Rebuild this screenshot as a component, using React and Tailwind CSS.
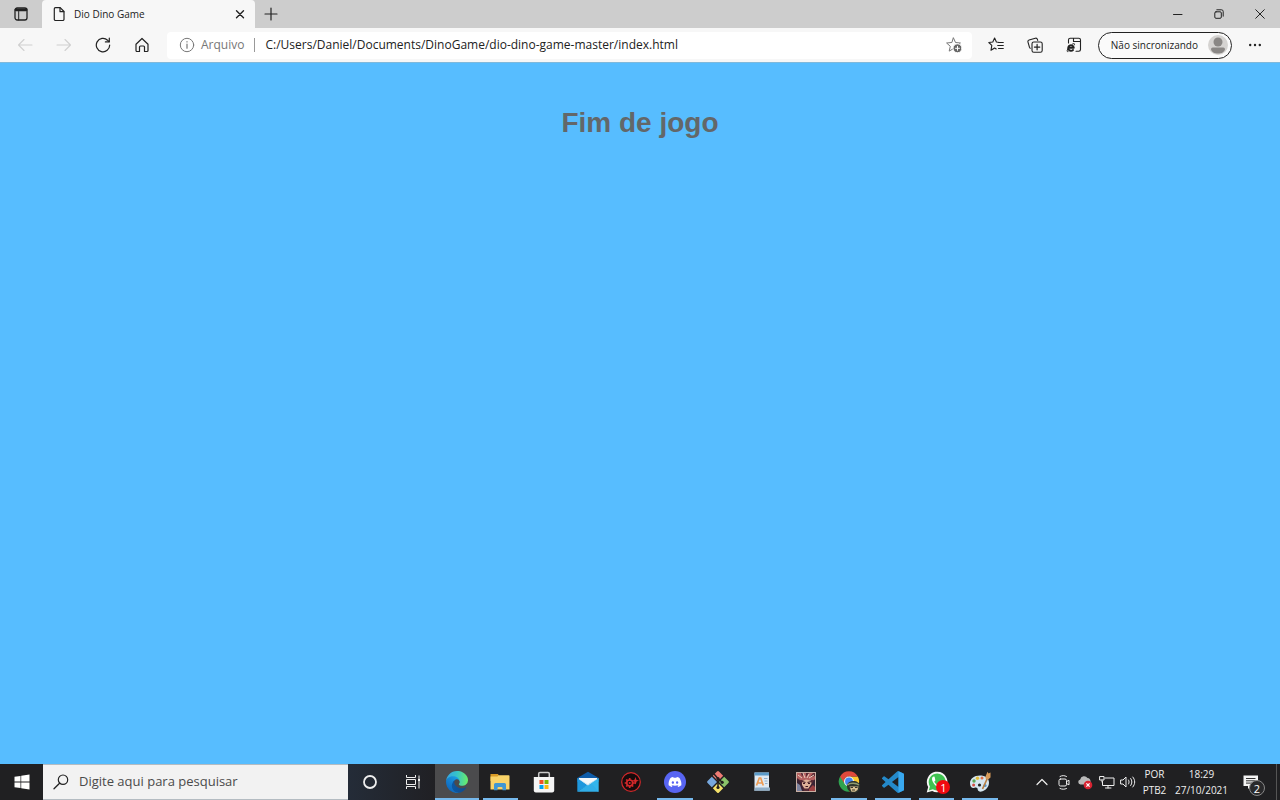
import React from "react";
import { FaDiscord } from "react-icons/fa";

function Icon({ size = 16, className = "", children }) {
  return (
    <svg
      width={size}
      height={size}
      viewBox={`0 0 ${size} ${size}`}
      fill="none"
      stroke="currentColor"
      strokeLinecap="round"
      strokeLinejoin="round"
      className={`shrink-0 ${className}`}
      aria-hidden="true"
    >
      {children}
    </svg>
  );
}

function IconButton({ label, className = "", children }) {
  return (
    <button type="button" aria-label={label} className={`flex items-center justify-center shrink-0 ${className}`}>
      {children}
    </button>
  );
}

const STAR = "M7.500 1l2 4.500 4.900.500-3.700 3.300 1.100 4.800L7.500 11.600l-4.300 2.500 1.100-4.800L.6 6l4.900-.5z";

function TabStrip() {
  return (
    <header className="flex h-7 bg-[#cdcdcd] text-[#222]">
      <IconButton label="Menu de ações da guia" className="w-[42px]">
        <Icon size={14}>
          <rect x="1" y="1" width="12" height="12" rx="2.200" strokeWidth="1.300" />
          <path d="M2 2.800h10" strokeWidth="2.800" />
          <path d="M4.700 4.500v8.500" />
        </Icon>
      </IconButton>
      <div className="flex w-[213px] items-center rounded-t bg-[#f7f7f7] pl-2.5">
        <Icon size={14}>
          <path d="M3.500.6h4.700L12 4.500V12.300a1.200 1.200 0 0 1-1.200 1.200H3.500A1.200 1.200 0 0 1 2.300 12.300V1.800A1.200 1.200 0 0 1 3.500.6z" strokeWidth="1.200" />
          <path d="M8 .8v3.900h3.800" strokeWidth="1.200" />
        </Icon>
        <span className="ml-2 flex-1 text-[10px]">Dio Dino Game</span>
        <IconButton label="Fechar guia" className="h-7 w-[30px]">
          <Icon size={10}>
            <path d="M1.500 1.800l7 7M8.500 1.800l-7 7" strokeWidth="1.400" />
          </Icon>
        </IconButton>
      </div>
      <IconButton label="Nova guia" className="w-8">
        <Icon size={14}>
          <path d="M7 1v12M1 7h12" strokeWidth="1.200" />
        </Icon>
      </IconButton>
      <div className="flex-1" />
      <IconButton label="Minimizar" className="w-[41px]">
        <Icon size={10}>
          <path d="M.5 5.500h8.500" />
        </Icon>
      </IconButton>
      <IconButton label="Restaurar" className="w-[41px]">
        <Icon size={10}>
          <rect x=".8" y="2.800" width="6.500" height="6.500" rx="1.200" />
          <path d="M2.800.8h4.700a1.700 1.700 0 0 1 1.700 1.700v4.700" />
        </Icon>
      </IconButton>
      <IconButton label="Fechar" className="w-[41px]">
        <Icon size={10}>
          <path d="M.7.7l8.600 8.600M9.300.7L.7 9.300" />
        </Icon>
      </IconButton>
    </header>
  );
}

function Toolbar() {
  return (
    <nav className="flex h-[35px] items-center border-b border-[#7fb9dc] bg-[#f7f7f7] pl-[5px] pr-1.5 text-[#222]">
      <IconButton label="Voltar" className="w-[39px] text-[#d0d0d0]">
        <Icon size={16}>
          <path d="M15 8H1.500M7 2.500L1.500 8l5.500 5.500" strokeWidth="1.100" />
        </Icon>
      </IconButton>
      <IconButton label="Avançar" className="w-[39px] text-[#d0d0d0]">
        <Icon size={16}>
          <path d="M1 8h13.500M9 2.500l5.500 5.500-5.500 5.500" strokeWidth="1.100" />
        </Icon>
      </IconButton>
      <IconButton label="Atualizar" className="w-[39px]">
        <Icon size={16}>
          <path d="M14.700 8A6.700 6.700 0 1 1 12.600 3.200L14 4.600" strokeWidth="1.200" />
          <path d="M14.300 1v3.900h-3.900" strokeWidth="1.200" />
        </Icon>
      </IconButton>
      <IconButton label="Página inicial" className="w-[39px]">
        <Icon size={16}>
          <path d="M2 7.200L8 1.500l6 5.700v6.300a1 1 0 0 1-1 1h-2.500V10a1 1 0 0 0-1-1h-3a1 1 0 0 0-1 1v4.500H3a1 1 0 0 1-1-1z" strokeWidth="1.200" />
        </Icon>
      </IconButton>
      <div className="ml-1.5 flex h-[27px] flex-1 items-center rounded bg-white pl-3 pr-1.5">
        <Icon size={16} className="text-[#777]">
          <circle cx="8" cy="8" r="6.700" />
          <path d="M8 7.200v4M8 4.700v.2" strokeWidth="1.200" />
        </Icon>
        <span className="ml-1.5 text-xs text-[#777]">Arquivo</span>
        <span className="ml-2.5 h-3.5 w-px bg-[#999]" />
        <input
          aria-label="Endereço"
          defaultValue="C:/Users/Daniel/Documents/DinoGame/dio-dino-game-master/index.html"
          className="ml-2.5 min-w-0 flex-1 bg-transparent text-xs text-[#222] outline-none"
        />
        <IconButton label="Adicionar aos favoritos" className="w-6 text-[#777]">
          <Icon size={16}>
            <path d={STAR} />
            <circle cx="11.500" cy="11.300" r="4.500" fill="#666" stroke="#fff" />
            <path d="M11.500 9.300v4M9.500 11.300h4" stroke="#fff" />
          </Icon>
        </IconButton>
      </div>
      <IconButton label="Favoritos" className="ml-[5px] w-[39px]">
        <Icon size={16}>
          <path d="M10.300 5.200l-1.900-.2L6.600 1 4.800 5 .8 5.500 3.800 8.300 3 13.300l3.600-2.300 1.600 1" strokeWidth="1.100" />
          <path d="M10.500 5.500h4.800M9.700 8.500h5.600M10.500 11.500h4.800" strokeWidth="1.100" />
        </Icon>
      </IconButton>
      <IconButton label="Coleções" className="w-[39px]">
        <Icon size={16}>
          <path d="M3.300 11.300a1.500 1.500 0 0 1-.8-.9L1 5.200a1.700 1.700 0 0 1 1.100-2.100l6.200-1.900a1.700 1.700 0 0 1 2.100 1.100l.3 1.100" strokeWidth="1.100" />
          <rect x="5" y="5" width="10.200" height="10.200" rx="1.800" strokeWidth="1.100" />
          <path d="M10.100 7.400v5.400M7.400 10.100h5.400" strokeWidth="1.200" />
        </Icon>
      </IconButton>
      <IconButton label="Modo Internet Explorer" className="w-[39px]">
        <Icon size={16}>
          <path d="M2.500 6V3a1.700 1.700 0 0 1 1.700-1.700h8.600A1.700 1.700 0 0 1 14.500 3v9.500a1.700 1.700 0 0 1-1.700 1.700H10M7.500 4.500h7M7.500 4.500V1.500" strokeWidth="1.100" />
          <path d="M2.200 10.800h5.600a2.800 2.800 0 1 0-.8 2.200" strokeWidth="1.900" />
          <path d="M2.500 11C.6 13.600.7 15 2 14.700M6.500 7C8.200 6 9 6.500 8.300 8" strokeWidth="1" />
        </Icon>
      </IconButton>
      <button type="button" className="ml-1 flex h-[27px] shrink-0 items-center gap-2.5 rounded-full border border-[#222] bg-[#fafafa] pl-3 pr-[3px] text-[10px]">
        Não sincronizando
        <svg width="20" height="20" viewBox="0 0 20 20" aria-hidden="true">
          <circle cx="10" cy="10" r="10" fill="#d5d3d1" />
          <circle cx="10" cy="7" r="4.500" fill="#8a8785" />
          <path d="M3 14.200a1.700 1.700 0 0 1 1.700-1.700h10.600a1.700 1.700 0 0 1 1.700 1.700C16.500 17 13.600 18.500 10 18.500S3.500 17 3 14.200z" fill="#8a8785" />
        </svg>
      </button>
      <IconButton label="Configurações e mais" className="ml-1 w-[38px]">
        <svg width="14" height="14" viewBox="0 0 14 14" fill="#222" aria-hidden="true">
          <circle cx="2.200" cy="7" r="1.200" />
          <circle cx="7" cy="7" r="1.200" />
          <circle cx="11.800" cy="7" r="1.200" />
        </svg>
      </IconButton>
    </nav>
  );
}

function AppSvg({ box = 22, size = 22, children }) {
  return (
    <svg width={size} height={size} viewBox={`0 0 ${box} ${box}`} aria-hidden="true">
      {children}
    </svg>
  );
}

const apps = [
  {
    name: "Microsoft Edge",
    open: true,
    active: true,
    icon: (
      <AppSvg box={256}>
        <defs>
          <linearGradient id="edgeBase" x1="60" y1="177" x2="241" y2="177" gradientUnits="userSpaceOnUse">
            <stop stopColor="#0c59a4" />
            <stop offset="1" stopColor="#114a8b" />
          </linearGradient>
          <linearGradient id="edgeLeft" x1="150" y1="95" x2="45" y2="225" gradientUnits="userSpaceOnUse">
            <stop stopColor="#1b9de2" />
            <stop offset=".5" stopColor="#1480d0" />
            <stop offset="1" stopColor="#0f68bd" />
          </linearGradient>
          <linearGradient id="edgeTop" x1="20" y1="80" x2="245" y2="100" gradientUnits="userSpaceOnUse">
            <stop stopColor="#35a9e0" />
            <stop offset=".45" stopColor="#36c3c9" />
            <stop offset="1" stopColor="#66eb6e" />
          </linearGradient>
        </defs>
        <path fill="url(#edgeBase)" d="M231 190.500a92.800 92.800 0 0 1-10.500 4.700 101.800 101.800 0 0 1-35.900 6.500c-47.300 0-88.500-32.600-88.500-74.300A31.500 31.500 0 0 1 112.500 100c-42.800 1.800-53.800 46.400-53.800 72.500 0 73.900 68.100 81.400 82.800 81.400 7.900 0 19.800-2.300 27-4.600l1.300-.4a128.300 128.300 0 0 0 66.600-52.800 4 4 0 0 0-5.300-5.700z" />
        <path fill="url(#edgeLeft)" d="M105.700 241.400A79.200 79.200 0 0 1 83 220.100a80.700 80.700 0 0 1 29.500-120c3.100-1.500 8.500-4.100 15.500-4a32.400 32.400 0 0 1 25.700 13 31.900 31.900 0 0 1 6.400 18.700c0-.2 24.500-79.600-80-79.600-43.900 0-80 41.700-80 78.200a130.200 130.200 0 0 0 12.100 56 128 128 0 0 0 156.400 67.100 75.600 75.600 0 0 1-62.800-8z" />
        <path fill="url(#edgeTop)" d="M152.300 148.900c-.8 1-3.300 2.500-3.300 5.600 0 2.600 1.700 5.100 4.700 7.200 14.400 10 41.500 8.700 41.600 8.700a59.600 59.600 0 0 0 30.300-8.300 61.400 61.400 0 0 0 30.400-52.900c.3-22.400-8-37.300-11.300-43.900C223.500 23.800 177.700 0 128 0A128 128 0 0 0 0 126.200c.5-36.500 36.800-66 80-66 3.500 0 23.500.3 42 10 16.300 8.600 24.900 19 30.900 29.200 6.200 10.700 7.300 24.200 7.300 29.500s-2.700 13.400-7.900 20z" />
      </AppSvg>
    ),
  },
  {
    name: "Explorador de Arquivos",
    open: true,
    icon: (
      <AppSvg>
        <path d="M1.500 3h7.500l1 2h10V10H1.500z" fill="#d99b26" />
        <path d="M1.500 5.500H8.500l1-1.300H19.700a.8.8 0 0 1 .8.800v13.500h-19z" fill="#f9d368" />
        <path d="M5 19.300v-5.800a1.500 1.500 0 0 1 1.500-1.500h9a1.500 1.500 0 0 1 1.500 1.500v5.800h-3.500V17a1 1 0 0 0-1-1h-3a1 1 0 0 0-1 1v2.300z" fill="#3f97d3" />
      </AppSvg>
    ),
  },
  {
    name: "Microsoft Store",
    icon: (
      <AppSvg>
        <path d="M5.700 7V2.800a1.300 1.300 0 0 1 1.300-1.300h8a1.300 1.300 0 0 1 1.300 1.300V7" fill="none" stroke="#c9c9c9" strokeWidth="1.500" />
        <path d="M.8 6h20.400v13.500a2 2 0 0 1-2 2H2.800a2 2 0 0 1-2-2z" fill="#f5f5f5" />
        <path d="M6.500 9h4v4h-4z" fill="#f05125" />
        <path d="M11.500 9h4v4h-4z" fill="#7eb900" />
        <path d="M6.500 14h4v4h-4z" fill="#00a3ee" />
        <path d="M11.500 14h4v4h-4z" fill="#fdb813" />
      </AppSvg>
    ),
  },
  {
    name: "Email",
    icon: (
      <AppSvg>
        <path d="M.3 7L11 .8 21.700 7v4H.3z" fill="#0f5ca8" />
        <path d="M2 7h18v8H2z" fill="#f5f8fa" />
        <path d="M.3 7L11 14.500.3 20.800z" fill="#1e97dd" />
        <path d="M21.700 7L8 15.500l13.700 5.300z" fill="#33b5ec" />
        <path d="M.3 20.800L14 11.800l7.700 9z" fill="#31aee8" />
        <path d="M.3 7L11 13.200 21.700 7 11 14.500z" fill="#d3e3ee" />
      </AppSvg>
    ),
  },
  {
    name: "Gears",
    icon: (
      <AppSvg>
        <circle cx="11" cy="11" r="9.300" fill="#160b0c" stroke="#d3282a" strokeWidth="1.200" />
        <circle cx="9.700" cy="12" r="3" fill="none" stroke="#d3282a" strokeWidth="1.700" />
        <path d="M9.700 7v2M9.700 15v2M4.700 12h2M13 12h3M6.200 8.500L7.500 9.700M6.200 15.500l1.300-1.200M13.200 15.500L12 14.300" stroke="#d3282a" strokeWidth="1.700" />
        <path d="M11.500 9.700l2.800-.6L15.600 6l.9 2.900 2.500.6-2.400.9-.9 3.200-1.200-2.800z" fill="#d3282a" />
        <circle cx="9.700" cy="12" r="1" fill="#d3282a" />
      </AppSvg>
    ),
  },
  {
    name: "Discord",
    open: true,
    icon: (
      <span className="flex h-[22px] w-[22px] items-center justify-center rounded-full bg-[#5865f2] text-white">
        <FaDiscord size={14} />
      </span>
    ),
  },
  {
    name: "Git Bash",
    icon: (
      <AppSvg>
        <path d="M10 .6a1.400 1.400 0 0 1 2 0l4.200 4.200L11 10 5.800 4.800z" fill="#ee7b75" />
        <path d="M17.200 5.800l4.200 4.200a1.400 1.400 0 0 1 0 2l-4.200 4.200L12 11z" fill="#8bc46a" />
        <path d="M4.800 5.800L10 11l-5.200 5.200L.6 12a1.400 1.400 0 0 1 0-2z" fill="#77a8de" />
        <path d="M11 12l5.200 5.200-4.200 4.200a1.400 1.400 0 0 1-2 0l-4.200-4.200z" fill="#f3e06a" />
        <path d="M7 3l4 4.500v9M11 7.500l4.200 3.800" fill="none" stroke="#211d1e" strokeWidth="1.500" />
        <circle cx="11" cy="7.500" r="1.600" fill="#211d1e" />
        <circle cx="11" cy="16.500" r="1.600" fill="#211d1e" />
        <circle cx="15.200" cy="11.300" r="1.600" fill="#211d1e" />
      </AppSvg>
    ),
  },
  {
    name: "WordPad",
    icon: (
      <AppSvg>
        <path d="M3.500 1.500h14.500v18H3.500z" fill="#dfeaf4" />
        <path d="M3.500 1.500h14.500v3H3.500z" fill="#5b9bc9" />
        <path d="M4.500 16.500h14.500v3.300H3z" fill="#8facc3" />
        <path d="M5.500 14.500L8.300 7h1.400l2.600 7.500M6.500 12h5" fill="none" stroke="#ec9c55" strokeWidth="1.700" />
        <path d="M13 7.500h3.500M13.500 10h3M14 12.500h2.500M6 18h9" stroke="#8fb0cc" />
      </AppSvg>
    ),
  },
  {
    name: "Jogo",
    icon: (
      <AppSvg>
        <path d="M1 1h20v20H1z" fill="#c9aea2" />
        <path d="M2 2h18v18H2z" fill="#5a2b35" />
        <path d="M2 2h4l1 4 2-4h2v4l3-4h4l-3 4 5-1v4H5L2 7z" fill="#b3605f" />
        <path d="M3 4l4 3M8 2l2 5M14 3l-2 4M19 4l-5 3" stroke="#eccfbe" />
        <path d="M7 10l4-1.500 5 1 .5 3.500-3 4.500H9.500L7 14z" fill="#ddb198" />
        <path d="M7 10.500l3.500 1M12.500 11.500l4-1M8 12.500h2M13 12.500h2M10.500 15.500h2.500" stroke="#3d1822" strokeWidth="1.200" />
        <path d="M2 8l4 3 1 3 2 6H2zM20 8l-3.500 5-3 5v2H20z" fill="#3a2434" />
        <path d="M2 12l3 2 2 6H2z" fill="#7d839f" />
        <path d="M14 18l4-4 2 2v4h-6z" fill="#9d4142" />
      </AppSvg>
    ),
  },
  {
    name: "Google Chrome",
    open: true,
    icon: (
      <AppSvg>
        <path d="M11 10.500L2.100 5.400A10.200 10.200 0 0 0 11 20.700l4.400-7.700z" fill="#2fa350" />
        <path d="M11 5.400h8.800A10.200 10.200 0 0 1 11 20.700l4.400-7.700z" fill="#fbc92f" />
        <path d="M2.100 5.400A10.200 10.200 0 0 1 19.800 5.400H11a5.100 5.100 0 0 0-4.400 7.700z" fill="#e0493c" />
        <circle cx="11" cy="10.500" r="5" fill="#f1f1f1" />
        <circle cx="11" cy="10.500" r="3.900" fill="#4285f4" />
        <path d="M9 15.500c0-4 3-5.500 6.500-5.500s6.300 2 6.300 5v3l-3 3.500h-6.500L9.500 18z" fill="#2d352c" />
        <path d="M11.500 15.500h9l-1 3.500-2.500 1.700h-3.500z" fill="#d8c193" />
        <path d="M9.500 14c2-2.300 9-2.300 11.500 0" fill="none" stroke="#8e9b70" strokeWidth="1.500" />
        <path d="M12.500 16.500h2.500M17 16.500h2.500M14 19h3" stroke="#3b3628" />
      </AppSvg>
    ),
  },
  {
    name: "Visual Studio Code",
    open: true,
    icon: (
      <AppSvg box={24}>
        <path fill="#2489ca" d="M23.150 2.587L18.210.21a1.494 1.494 0 0 0-1.705.29l-9.460 8.630-4.120-3.128a.999.999 0 0 0-1.276.057L.327 7.261A1 1 0 0 0 .326 8.740L3.899 12 .326 15.260a1 1 0 0 0 .001 1.479L1.650 17.940a.999.999 0 0 0 1.276.057l4.120-3.128 9.460 8.630a1.492 1.492 0 0 0 1.704.29l4.942-2.377A1.500 1.500 0 0 0 24 20.060V3.939a1.500 1.500 0 0 0-.85-1.352zm-5.146 14.861L10.826 12l7.178-5.448v10.896z" />
        <path fill="#39a9f0" d="M18 .2l5.200 2.400A1.500 1.500 0 0 1 24 3.900v16.200a1.500 1.500 0 0 1-.8 1.300L18 23.800z" />
      </AppSvg>
    ),
  },
  {
    name: "WhatsApp",
    open: true,
    badge: "1",
    icon: (
      <AppSvg>
        <path d="M.7 21.500l1.500-5.400A10.300 10.300 0 1 1 6.200 20z" fill="#f7f7f7" />
        <path d="M2.800 19.400l1.100-4A8.500 8.500 0 1 1 6.800 18.300z" fill="#3fc351" />
        <path d="M8.700 6.200c-.3-.6-.5-.6-1-.6-.4 0-1.700.7-1.700 2.500s1.300 3.500 1.500 3.800c.2.200 2.500 4 6.300 5.100 1.800.4 3-.7 3.200-1.500.2-.7.2-1.300 0-1.400l-2.400-1.200c-.3-.1-.5-.1-.7.2l-1 1.200c-.2.300-.4.300-.7.100-1.700-.8-2.900-1.900-3.800-3.500-.2-.3 0-.4.200-.6.700-.8.900-1 .7-1.400z" fill="#fff" />
      </AppSvg>
    ),
  },
  {
    name: "Paint",
    open: true,
    icon: (
      <AppSvg>
        <path d="M11 4.500c-6 0-10 3.500-10 7.500s2 5.500 4.500 4.800c2.300-.6 3 .2 3.200 1.700.3 1.700 2 2.500 4 2 4-1 7.300-4.500 7.300-9s-4-7-9-7z" fill="#d6e6ef" />
        <circle cx="5" cy="10" r="1.700" fill="#5ba957" />
        <circle cx="8.500" cy="7.200" r="1.700" fill="#e3bd3b" />
        <circle cx="13" cy="7" r="1.500" fill="#de6d46" />
        <circle cx="4.600" cy="14" r="1.500" fill="#d34d44" />
        <circle cx="10.500" cy="14" r="1.600" fill="#252525" />
        <circle cx="16" cy="14.500" r="1.600" fill="#4f94d0" />
        <path d="M19 6l-5.500 12" stroke="#b87f43" strokeWidth="1.700" />
        <path d="M16.500 5.500L18.500.8l1 1.800L21.500 1.500v5l-2.500 2-2.500-1z" fill="#d79a59" />
      </AppSvg>
    ),
  },
];

function TaskbarApp({ app }) {
  return (
    <button
      type="button"
      aria-label={app.name}
      className={`relative flex h-full flex-1 items-center justify-center ${app.active ? "bg-[#4b4b4d]" : ""}`}
    >
      {app.icon}
      {app.badge && (
        <span className="absolute right-2 top-4 flex h-3.5 w-3.5 items-center justify-center rounded-full bg-[#f00910] text-[11px] leading-none text-white">
          {app.badge}
        </span>
      )}
      {app.open && (
        <span className={`absolute bottom-0 h-0.5 bg-[#76b9ed] ${app.active ? "inset-x-0" : "inset-x-1"}`} />
      )}
    </button>
  );
}

function Taskbar() {
  return (
    <footer className="flex h-9 items-center bg-[#202022] text-[#eee]">
      <IconButton label="Iniciar" className="h-full w-[43px]">
        <svg width="16" height="16" viewBox="0 0 16 16" fill="#fff" aria-hidden="true">
          <path d="M.5 2.700L6.500 1.900v5.700h-6zM7.200 1.800L15.500.6v7h-8.300zM.5 8.400h6v5.700l-6-.8zM7.200 8.400h8.300v7l-8.300-1.200z" />
        </svg>
      </IconButton>
      <label className="flex h-full w-[305px] items-center border-y border-[#b4bcc2] bg-[#f2f2f2] pl-2.5 text-[#222]">
        <Icon size={16}>
          <circle cx="10" cy="5.700" r="4.700" strokeWidth="1.200" />
          <path d="M6.600 9.200L1 14.800" strokeWidth="1.300" />
        </Icon>
        <input
          type="search"
          aria-label="Pesquisar"
          placeholder="Digite aqui para pesquisar"
          className="ml-2.5 min-w-0 flex-1 bg-transparent text-[13px] outline-none placeholder:text-[#4a4a4a]"
        />
      </label>
      <div className="flex h-full w-[87px] bg-linear-to-r from-[#242c38] to-[#202024]">
        <IconButton label="Cortana" className="flex-1">
          <Icon size={14}>
            <circle cx="7" cy="7" r="6" strokeWidth="1.800" />
          </Icon>
        </IconButton>
        <IconButton label="Visão de tarefas" className="flex-1">
          <Icon size={16}>
            <path d="M1.500 1v2.500h9V1M1.500 15v-2.500h9V15M1.500 5.500h9v5h-9zM14 1.500v13" strokeLinecap="butt" />
            <path d="M13 6h2" strokeWidth="2.200" strokeLinecap="butt" />
          </Icon>
        </IconButton>
      </div>
      <div className="flex h-full w-[567px]">
        {apps.map((app) => (
          <TaskbarApp key={app.name} app={app} />
        ))}
      </div>
      <div className="flex-1" />
      <div className="flex items-center">
        <IconButton label="Mostrar ícones ocultos" className="w-[22px]">
          <Icon size={12}>
            <path d="M1 8.500l5-5 5 5" strokeWidth="1.200" />
          </Icon>
        </IconButton>
        <IconButton label="Reunir agora" className="w-[21px]">
          <Icon size={16}>
            <rect x="3" y="5" width="7.500" height="7" rx="1.500" />
            <path d="M10.500 7.500l2.500-1.200v4.500l-2.500-1.200M4 2.500c2-1.200 4.500-1.200 6.500 0M4 14.500c2 1 4.500 1 6.500 0" />
          </Icon>
        </IconButton>
        <IconButton label="OneDrive" className="w-[22px]">
          <svg width="16" height="16" viewBox="0 0 16 16" aria-hidden="true">
            <path d="M3.500 10.500a2.600 2.600 0 0 1-.3-5.100A4 4 0 0 1 10.500 4a3.300 3.300 0 0 1 3 3.200v3.300z" fill="#b9b9b9" />
            <circle cx="11" cy="11" r="4.300" fill="#d92332" />
            <path d="M9.400 9.400l3.200 3.200M12.600 9.400l-3.200 3.200" stroke="#fff" strokeWidth="1.200" />
          </svg>
        </IconButton>
        <IconButton label="Rede" className="w-[21px]">
          <Icon size={16}>
            <path d="M6 4h9v7.500H3.500V7.500M9 11.500V14M6.500 14h5.500" />
            <path d="M1 2.500h4v3.500H1zM3 6v2" />
          </Icon>
        </IconButton>
        <IconButton label="Volume" className="w-[22px]">
          <Icon size={16}>
            <path d="M1 6h2l3-3v10l-3-3H1z" />
            <path d="M8.500 6c.8 1.200.8 2.800 0 4M10.700 4.500c1.600 2 1.600 5 0 7M12.800 3c2.600 3 2.600 7 0 10" />
          </Icon>
        </IconButton>
      </div>
      <button type="button" className="w-[31px] text-center text-[10px] leading-4">
        <span className="block">POR</span>
        <span className="block">PTB2</span>
      </button>
      <button type="button" className="w-[63px] text-center text-[10px] leading-4">
        <span className="block">18:29</span>
        <span className="block">27/10/2021</span>
      </button>
      <button type="button" aria-label="Notificações" className="relative mr-[7px] flex h-full w-9 items-center justify-center">
        <svg width="16" height="16" viewBox="0 0 16 16" aria-hidden="true">
          <path d="M.5 1.500h14.500v10.500H8L5 15v-3H.5z" fill="#f4f4f4" />
          <path d="M3 4.500h9.500M3 6.800h9.500M3 9.100h6" stroke="#303030" />
        </svg>
        <span className="absolute bottom-1 right-1 flex h-4 w-4 items-center justify-center rounded-full border border-[#888] bg-[#29292b] text-[11px] leading-none text-white">
          2
        </span>
      </button>
      <button type="button" aria-label="Mostrar área de trabalho" className="h-full w-1 border-l border-[#555]" />
    </footer>
  );
}

export default function App() {
  return (
    <div className="flex min-h-screen flex-col font-['Open_Sans','Noto_Sans',sans-serif]">
      <TabStrip />
      <Toolbar />
      <main className="flex-1 bg-[#57bdff] pt-11 text-center">
        <h1 className="font-['Liberation_Sans',Arial,sans-serif] text-[28px] font-bold leading-8 text-[#636769]">Fim de jogo</h1>
      </main>
      <Taskbar />
    </div>
  );
}
